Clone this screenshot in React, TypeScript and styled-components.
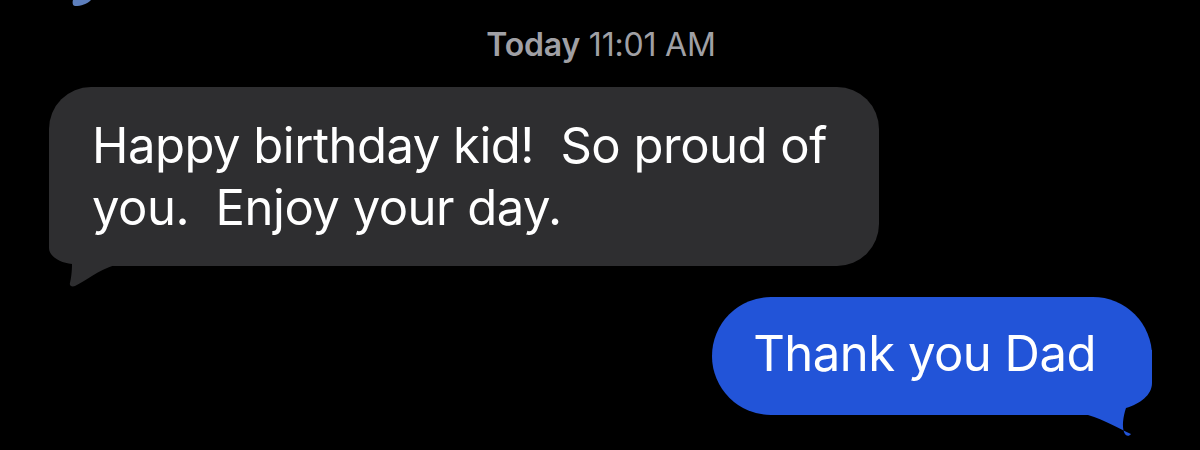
import React from 'react';
import styled, { createGlobalStyle } from 'styled-components';

const GlobalStyle = createGlobalStyle`
  html, body {
    margin: 0;
    padding: 0;
    background: #000000;
  }
  body {
    font-family: Inter, "Noto Sans", "Liberation Sans", sans-serif;
    -webkit-font-smoothing: antialiased;
  }
`;

const Screen = styled.div`
  position: relative;
  width: 1200px;
  height: 450px;
  overflow: hidden;
  background: #000000;
  display: flex;
  flex-direction: column;
  padding: 25px 48px 0 49px;
  box-sizing: border-box;
`;

const Timestamp = styled.div`
  align-self: center;
  margin-left: 1px;
  font-size: 32px;
  line-height: 40px;
  color: #a0a0a5;
  letter-spacing: -0.2px;

  b {
    font-weight: 600;
  }
`;

const Row = styled.div<{ $mine?: boolean }>`
  display: flex;
  justify-content: ${(p) => (p.$mine ? 'flex-end' : 'flex-start')};
  margin-top: ${(p) => (p.$mine ? '31px' : '22px')};
`;

const Bubble = styled.div<{ $mine?: boolean }>`
  position: relative;
  background: ${(p) => (p.$mine ? '#2254d8' : '#2e2e30')};
  color: #ffffff;
  font-size: 49px;
  line-height: 62px;
  letter-spacing: -0.5px;
  white-space: pre-wrap;
  border-radius: ${(p) => (p.$mine ? '59px' : '42px')};
  padding: ${(p) => (p.$mine ? '26px 56px 30px 41px' : '28px 52px 27px 43px')};
`;

const Text = styled.span`
  position: relative;
  z-index: 1;
`;

const Tail = styled.svg<{ $mine?: boolean }>`
  position: absolute;
  bottom: ${(p) => (p.$mine ? '-22px' : '-21px')};
  ${(p) => (p.$mine ? 'right: 0;' : 'left: 0;')}
  width: 70px;
  height: ${(p) => (p.$mine ? '87px' : '70px')};
`;

const Fragment = styled.svg`
  position: absolute;
  left: 70px;
  top: -4px;
  width: 24px;
  height: 12px;
`;

const App = () => {
  return (
    <>
      <GlobalStyle />
      <Screen>
        <Fragment viewBox="0 0 24 12">
          <path d="M3 4 C8 4 16 4 21 4 C17 8 11 10 5 10 C3 10 2 7 3 4 Z" fill="#5d7fbd" />
        </Fragment>
        <Timestamp>
          <b>Today</b> 11:01 AM
        </Timestamp>
        <Row>
          <Bubble>
            <Tail viewBox="0 0 70 70">
              <path
                d="M0 3 L0 31 C0 39 11 46 23 47 C23 55 22 62 21 66 C20 69 23 70 26 69 C37 64 49 53 66 48 L66 3 Z"
                fill="#2e2e30"
              />
            </Tail>
            <Text>{'Happy birthday kid!  So proud of\nyou.  Enjoy your day.'}</Text>
          </Bubble>
        </Row>
        <Row $mine>
          <Bubble $mine>
            <Tail $mine viewBox="0 0 70 87">
              <path
                d="M70 0 L70 33 C70 45 58 54 44 58 C41 67 40 76 42 82 C43 86 47 87 49 84 C36 78 23 70 6 65 L6 0 Z"
                fill="#2254d8"
              />
            </Tail>
            <Text>Thank you Dad</Text>
          </Bubble>
        </Row>
      </Screen>
    </>
  );
};

export default App;
